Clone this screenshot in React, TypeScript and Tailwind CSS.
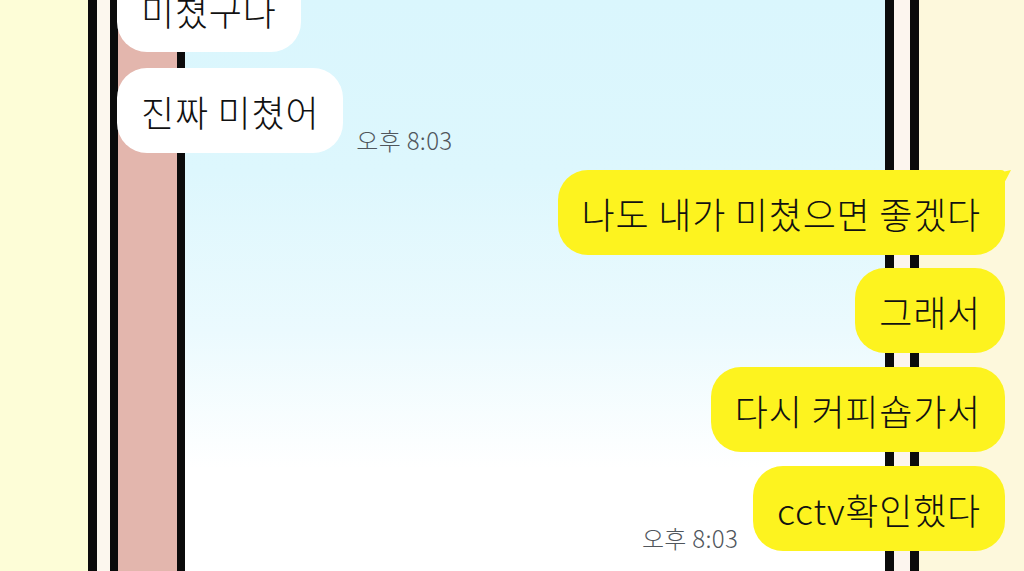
const font = "font-['Noto_Sans_CJK_KR','Noto_Sans',sans-serif]";

const Strip = ({ className }: { className: string }) => <div className={`h-full shrink-0 ${className}`} />;

const Time = () => (
  <span className="pb-[1px] text-[24px] font-light leading-none tracking-[0.3px] text-[#50565c] whitespace-nowrap">오후 8:03</span>
);

const Bubble = ({ text, mine = false, tail = false }: { text: string; mine?: boolean; tail?: boolean }) => (
  <div
    className={`relative flex h-[85px] shrink-0 items-center px-[24px] text-[36px] font-light leading-none tracking-[0.8px] text-[#111] whitespace-nowrap ${
      mine ? "bg-[#fdf31f]" : "bg-white"
    } ${tail ? "rounded-[30px] rounded-tr-[4px]" : "rounded-[30px]"}`}
  >
    {text}
    {tail && (
      <svg className="absolute -right-[6px] top-0" width="30" height="34" viewBox="0 0 30 34">
        <path d="M0 0 L17 3 L30 0 Q26 8 22 15 Q17 23 13 34 L0 34 Z" fill="#fdf31f" />
      </svg>
    )}
  </div>
);

export default function App() {
  return (
    <div className={`grid h-[571px] w-[1024px] overflow-hidden ${font}`}>
      {/* background frame */}
      <div className="col-start-1 row-start-1 flex h-[571px]">
        <Strip className="w-[88px] bg-[#fdfdd7]" />
        <Strip className="w-[9px] bg-[#0b0b0b]" />
        <Strip className="w-[13px] bg-[#fcf7ee]" />
        <Strip className="w-[8px] bg-[#0b0b0b]" />
        <Strip className="w-[59px] bg-[#e3b6ad]" />
        <Strip className="w-[8px] bg-[#0b0b0b]" />
        <Strip className="flex-1 bg-[linear-gradient(to_bottom,#daf6fd_0%,#ddf7fd_30%,#ebfafe_58%,#ffffff_82%,#ffffff_100%)]" />
        <Strip className="w-[9px] bg-[#0b0b0b]" />
        <Strip className="w-[16px] bg-[#fcf5ee]" />
        <Strip className="w-[9px] bg-[#0b0b0b]" />
        <Strip className="w-[105px] bg-[#fdf8dc]" />
      </div>

      {/* chat */}
      <div className="col-start-1 row-start-1 flex flex-col pl-[117px] pr-[19px]">
        <div className="-mt-[33px] flex">
          <Bubble text="미쳤구나" />
        </div>
        <div className="mt-[16px] flex items-end gap-[13px]">
          <Bubble text="진짜 미쳤어" />
          <Time />
        </div>
        <div className="mt-[17px] flex justify-end">
          <Bubble text="나도 내가 미쳤으면 좋겠다" mine tail />
        </div>
        <div className="mt-[13px] flex justify-end">
          <Bubble text="그래서" mine />
        </div>
        <div className="mt-[14px] flex justify-end">
          <Bubble text="다시 커피숍가서" mine />
        </div>
        <div className="mt-[14px] flex items-end justify-end gap-[15px]">
          <Time />
          <Bubble text="cctv확인했다" mine />
        </div>
      </div>
    </div>
  );
}
